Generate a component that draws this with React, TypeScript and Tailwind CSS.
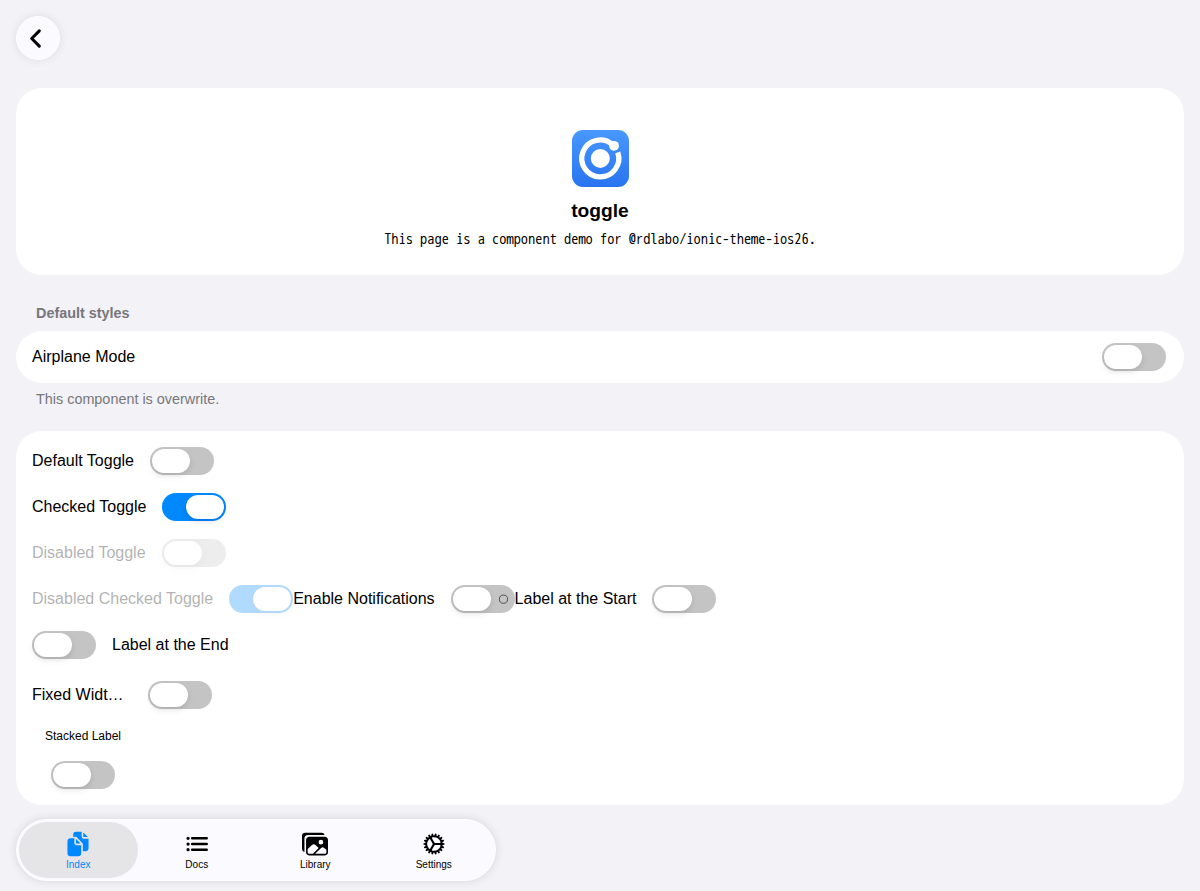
import type { ReactNode } from 'react';
import clsx from 'clsx';
import { IoChevronBack, IoCog, IoDocuments, IoImages, IoList } from 'react-icons/io5';

function Switch({ checked = false, mark = false }: { checked?: boolean; mark?: boolean }) {
  return (
    <span
      className={clsx(
        'flex h-7 w-16 shrink-0 items-center overflow-visible rounded-full p-0.5',
        checked ? 'justify-end bg-[#0088ff]' : 'bg-[#c4c4c4]',
      )}
    >
      <span className="h-6 w-[38px] rounded-full bg-white shadow-[0_3px_4px_rgba(0,0,0,0.06),0_3px_8px_rgba(0,0,0,0.06)]" />
      {mark && (
        <svg className="ml-[7px] size-[11px]" viewBox="0 0 11 11" fill="none" stroke="#444" strokeWidth="0.9">
          <circle cx="5.5" cy="5.2" r="4.1" />
        </svg>
      )}
    </span>
  );
}

function Toggle({
  children,
  checked,
  disabled,
  mark,
  end,
}: {
  children: ReactNode;
  checked?: boolean;
  disabled?: boolean;
  mark?: boolean;
  end?: boolean;
}) {
  return (
    <label className={clsx('flex items-center gap-4', disabled && 'opacity-30', end && 'flex-row-reverse')}>
      <span className="whitespace-nowrap leading-7">{children}</span>
      <Switch checked={checked} mark={mark} />
    </label>
  );
}

function Logo() {
  return (
    <svg className="size-[57px]" viewBox="0 0 57 57">
      <defs>
        <linearGradient id="logo" x1="0" y1="0" x2="0" y2="1">
          <stop offset="0" stopColor="#4898ff" />
          <stop offset="1" stopColor="#2874f0" />
        </linearGradient>
      </defs>
      <rect width="57" height="57" rx="11" fill="url(#logo)" />
      <circle cx="28.3" cy="28.4" r="9.5" fill="#fff" />
      <path
        d="M40.4 14.4A18.5 18.5 0 1 0 45.8 22.4"
        fill="none"
        stroke="#fff"
        strokeWidth="5.3"
      />
      <circle cx="42" cy="15.8" r="4.9" fill="#fff" />
    </svg>
  );
}

const tabs = [
  { label: 'Index', Icon: IoDocuments, active: true },
  { label: 'Docs', Icon: IoList, active: false },
  { label: 'Library', Icon: IoImages, active: false },
  { label: 'Settings', Icon: IoCog, active: false },
];

export default function App() {
  return (
    <div className="flex h-[891px] w-full flex-col overflow-hidden bg-[#f2f2f7] px-4 font-['Liberation_Sans',sans-serif] text-base text-black">
      <header className="flex h-[88px] shrink-0 pt-4">
        <button className="flex size-11 items-center justify-center rounded-full border border-white bg-[#fafaff] pr-[5px] shadow-[0_0_10px_rgba(0,0,0,0.09)]">
          <IoChevronBack className="size-[27px] shrink-0 [&_path]:[stroke-width:58px]" />
        </button>
      </header>

      <section className="flex h-[187px] shrink-0 flex-col items-center rounded-[26px] bg-white pt-[42px]">
        <Logo />
        <h1 className="mt-3 text-[19.2px] leading-6 font-bold">toggle</h1>
        <p className="mt-1.5 font-['WenQuanYi_Zen_Hei_Mono','Noto_Sans_Mono_CJK_JP',monospace] text-[14.4px] leading-5 whitespace-nowrap">
          This page is a component demo for @rdlabo/ionic-theme-ios26.
        </p>
      </section>

      <h2 className="mt-7 pl-5 text-[14.4px] leading-5 font-bold text-[#77767b]">Default styles</h2>
      <section className="mt-2 flex h-[52px] shrink-0 items-center justify-between rounded-[26px] bg-white pr-[18px] pl-4">
        <span>Airplane Mode</span>
        <Switch />
      </section>
      <p className="mt-1.5 pl-5 text-[14.4px] leading-5 text-[#77767b]">This component is overwrite.</p>

      <section className="mt-[22px] flex h-[374px] shrink-0 flex-col rounded-[26px] bg-white px-4 pt-4">
        <div className="flex flex-col items-start gap-[18px]">
          <Toggle>Default Toggle</Toggle>
          <Toggle checked>Checked Toggle</Toggle>
          <Toggle disabled>Disabled Toggle</Toggle>
          <div className="flex">
            <Toggle checked disabled>Disabled Checked Toggle</Toggle>
            <Toggle mark>Enable Notifications</Toggle>
            <Toggle>Label at the Start</Toggle>
          </div>
          <Toggle end>Label at the End</Toggle>
        </div>
        <label className="mt-[22px] flex items-center gap-4">
          <span className="w-[100px] leading-7">Fixed Widt…</span>
          <Switch />
        </label>
        <label className="mt-[18px] flex w-[102px] flex-col items-center self-start">
          <span className="text-xs leading-[18px]">Stacked Label</span>
          <span className="mt-4">
            <Switch />
          </span>
        </label>
      </section>

      <nav className="mt-3.5 flex h-[62px] w-[480px] shrink-0 rounded-full border border-white bg-[#fafaff] p-0.5 shadow-[0_0_10px_rgba(0,0,0,0.12)]">
        {tabs.map(({ label, Icon, active }) => (
          <a
            key={label}
            className={clsx(
              'flex flex-1 flex-col items-center rounded-full pt-[9px] text-[10px] leading-3',
              active && 'bg-[#e5e5e8] text-[#0088ff]',
            )}
          >
            <Icon className="size-[26px]" />
            <span className="mt-0.5">{label}</span>
          </a>
        ))}
      </nav>
    </div>
  );
}
